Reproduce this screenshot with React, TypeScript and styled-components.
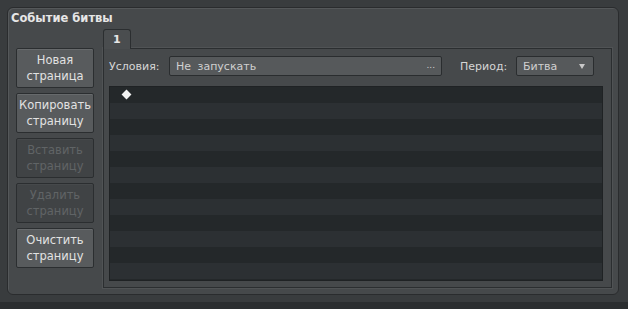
import * as React from 'react';
import styled, { createGlobalStyle } from 'styled-components';

const GlobalStyle = createGlobalStyle`
    html, body {
        margin: 0;
        padding: 0;
        background: #2f3234;
    }
    #root {
        width: 628px;
        height: 309px;
        overflow: hidden;
    }
`

const Frame = styled.div`
    width: 628px;
    height: 309px;
    box-sizing: border-box;
    padding: 7px 9px 7px 7px;
    background: #393c3e;
    border-bottom: 7px solid #2b2e30;
    font-family: "DejaVu Sans", "Open Sans", sans-serif;
`

const Panel = styled.div`
    height: 100%;
    box-sizing: border-box;
    background: #46494b;
    border: 1px solid #2a2c2e;
    border-radius: 6px;
    box-shadow: inset 1px 1px 0 #55585a;
    display: flex;
    flex-direction: column;
    padding: 4px 6px 6px 3px;
`

const Title = styled.div`
    color: #e6e6e6;
    font-size: 11.5px;
    font-weight: bold;
    height: 17px;
    line-height: 13px;
    flex-shrink: 0;
`

const Body = styled.div`
    flex: 1;
    min-height: 0;
    display: flex;
    gap: 9px;
`

const Buttons = styled.div`
    display: flex;
    flex-direction: column;
    gap: 5px;
    padding-top: 19px;
    padding-left: 5px;
`

const Button = styled.div<{ $disabled?: boolean }>`
    width: 78px;
    height: 40px;
    box-sizing: border-box;
    border: 1px solid #2b2e30;
    border-radius: 2px;
    background: ${p => p.$disabled ? '#404345' : '#585b5d'};
    box-shadow: inset 0 1px 0 ${p => p.$disabled ? '#46494b' : '#676a6c'};
    color: ${p => p.$disabled ? '#606466' : '#e2e2e2'};
    font-size: 11.5px;
    line-height: 16px;
    display: flex;
    align-items: center;
    justify-content: center;
    text-align: center;
`

const TabArea = styled.div`
    flex: 1;
    min-height: 0;
    display: flex;
    flex-direction: column;
`

const TabBar = styled.div`
    display: flex;
    height: 19px;
    flex-shrink: 0;
`

const Tab = styled.div`
    width: 28px;
    box-sizing: border-box;
    background: #4a4d4f;
    border: 1px solid #2b2e30;
    border-bottom: none;
    border-radius: 3px 3px 0 0;
    color: #e6e6e6;
    font-size: 11px;
    font-weight: bold;
    padding: 3px 0 0 9px;
    position: relative;
    z-index: 1;
    margin-bottom: -1px;
`

const TabPanel = styled.div`
    flex: 1;
    min-height: 0;
    box-sizing: border-box;
    background: #46494b;
    border: 1px solid #2b2e30;
    box-shadow: 0 0 0 1px #505355;
    padding: 7px 8px 6px 5px;
    display: flex;
    flex-direction: column;
    gap: 10px;
`

const Row = styled.div`
    display: flex;
    align-items: center;
    height: 20px;
    flex-shrink: 0;
    padding-right: 9px;
`

const Label = styled.span<{ $width: number; $indent?: number }>`
    width: ${p => p.$width}px;
    box-sizing: border-box;
    padding-left: ${p => p.$indent || 0}px;
    color: #d6d6d6;
    font-size: 11px;
`

const Field = styled.div<{ $width?: number }>`
    ${p => p.$width ? `width: ${p.$width}px;` : 'flex: 1;'}
    height: 20px;
    box-sizing: border-box;
    background: #56595b;
    border: 1px solid #2a2d2f;
    border-radius: 2px;
    color: #d0d0d0;
    font-size: 11px;
    display: flex;
    align-items: center;
    justify-content: space-between;
    padding: 0 6px 0 6px;
    word-spacing: 3px;
`

const Dots = styled.span`
    color: #cfcfcf;
    font-size: 9px;
    margin-top: -3px;
`

const Arrow = styled.span`
    width: 0;
    height: 0;
    border-left: 3px solid transparent;
    border-right: 3px solid transparent;
    border-top: 5px solid #c8c8c8;
    margin-right: 2px;
`

const Grid = styled.div`
    flex: 1;
    min-height: 0;
    box-sizing: border-box;
    border: 1px solid #1f2224;
    background: #2b2f31;
    overflow: hidden;
`

const Stripe = styled.div<{ $dark: boolean }>`
    height: 16px;
    background: ${p => p.$dark ? '#24282a' : '#2c3033'};
    position: relative;
`

const Diamond = styled.div`
    position: absolute;
    left: 13px;
    top: 4px;
    width: 7px;
    height: 7px;
    background: #f2f2f2;
    transform: rotate(45deg);
`

export default function App() {
    const stripes = Array.from({ length: 13 }, (_, i) => i);
    return (
        <React.Fragment>
            <GlobalStyle />
            <Frame>
                <Panel>
                    <Title>Событие битвы</Title>
                    <Body>
                        <Buttons>
                            <Button>Новая<br />страница</Button>
                            <Button>Копировать<br />страницу</Button>
                            <Button $disabled>Вставить<br />страницу</Button>
                            <Button $disabled>Удалить<br />страницу</Button>
                            <Button>Очистить<br />страницу</Button>
                        </Buttons>
                        <TabArea>
                            <TabBar>
                                <Tab>1</Tab>
                            </TabBar>
                            <TabPanel>
                                <Row>
                                    <Label $width={60}>Условия:</Label>
                                    <Field>
                                        <span>Не запускать</span>
                                        <Dots>...</Dots>
                                    </Field>
                                    <Label $width={74} $indent={18}>Период:</Label>
                                    <Field $width={78}>
                                        <span>Битва</span>
                                        <Arrow />
                                    </Field>
                                </Row>
                                <Grid>
                                    {stripes.map(i =>
                                        <Stripe key={`row-${i}`} $dark={i % 2 === 0}>
                                            {i === 0 && <Diamond />}
                                        </Stripe>
                                    )}
                                </Grid>
                            </TabPanel>
                        </TabArea>
                    </Body>
                </Panel>
            </Frame>
        </React.Fragment>
    )
}
